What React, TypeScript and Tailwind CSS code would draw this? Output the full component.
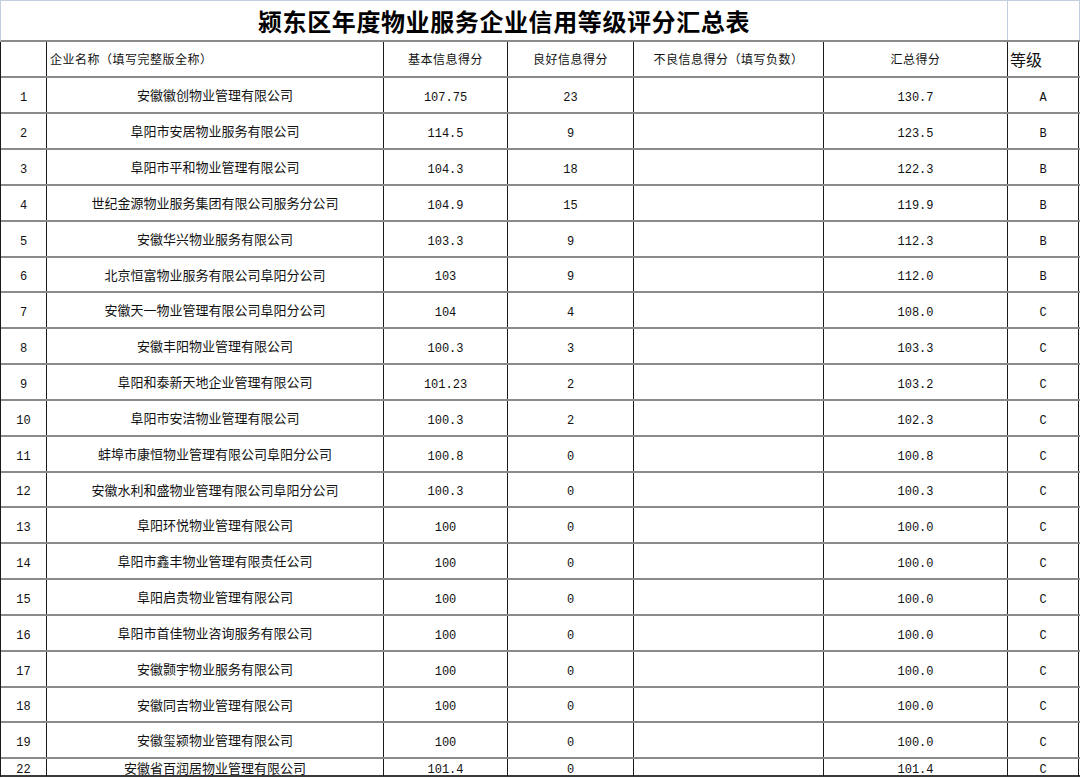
import React from 'react';

const rows = [
  { no: '1', name: '安徽徽创物业管理有限公司', base: '107.75', good: '23', total: '130.7', grade: 'A' },
  { no: '2', name: '阜阳市安居物业服务有限公司', base: '114.5', good: '9', total: '123.5', grade: 'B' },
  { no: '3', name: '阜阳市平和物业管理有限公司', base: '104.3', good: '18', total: '122.3', grade: 'B' },
  { no: '4', name: '世纪金源物业服务集团有限公司服务分公司', base: '104.9', good: '15', total: '119.9', grade: 'B' },
  { no: '5', name: '安徽华兴物业服务有限公司', base: '103.3', good: '9', total: '112.3', grade: 'B' },
  { no: '6', name: '北京恒富物业服务有限公司阜阳分公司', base: '103', good: '9', total: '112.0', grade: 'B' },
  { no: '7', name: '安徽天一物业管理有限公司阜阳分公司', base: '104', good: '4', total: '108.0', grade: 'C' },
  { no: '8', name: '安徽丰阳物业管理有限公司', base: '100.3', good: '3', total: '103.3', grade: 'C' },
  { no: '9', name: '阜阳和泰新天地企业管理有限公司', base: '101.23', good: '2', total: '103.2', grade: 'C' },
  { no: '10', name: '阜阳市安洁物业管理有限公司', base: '100.3', good: '2', total: '102.3', grade: 'C' },
  { no: '11', name: '蚌埠市康恒物业管理有限公司阜阳分公司', base: '100.8', good: '0', total: '100.8', grade: 'C' },
  { no: '12', name: '安徽水利和盛物业管理有限公司阜阳分公司', base: '100.3', good: '0', total: '100.3', grade: 'C' },
  { no: '13', name: '阜阳环悦物业管理有限公司', base: '100', good: '0', total: '100.0', grade: 'C' },
  { no: '14', name: '阜阳市鑫丰物业管理有限责任公司', base: '100', good: '0', total: '100.0', grade: 'C' },
  { no: '15', name: '阜阳启贵物业管理有限公司', base: '100', good: '0', total: '100.0', grade: 'C' },
  { no: '16', name: '阜阳市首佳物业咨询服务有限公司', base: '100', good: '0', total: '100.0', grade: 'C' },
  { no: '17', name: '安徽颢宇物业服务有限公司', base: '100', good: '0', total: '100.0', grade: 'C' },
  { no: '18', name: '安徽同吉物业管理有限公司', base: '100', good: '0', total: '100.0', grade: 'C' },
  { no: '19', name: '安徽玺颍物业管理有限公司', base: '100', good: '0', total: '100.0', grade: 'C' },
];

const cjk = "font-['Noto_Sans_CJK_SC',sans-serif]";
const mono = "font-['Liberation_Mono','Noto_Sans_CJK_SC',monospace] pt-[5px]";
const cols = 'grid grid-cols-[46px_337px_124px_126px_190px_184px_71px]';
const cell = 'flex items-center justify-center border-r border-[#1a1a1a]';

const App = () => {
  return (
    <div className="w-[1080px] h-[778px] bg-white text-[#111] overflow-hidden">
      {/* Title row */}
      <div className="flex h-[42px] border-t border-l border-[#c5cde0] border-b-2 border-b-[#8a8a8a]">
        <div className={`w-[1007px] flex items-center justify-center border-r border-[#c5cde0] text-[24px] font-bold tracking-[0.6px] text-black ${cjk}`}>
          颍东区年度物业服务企业信用等级评分汇总表
        </div>
        <div className="w-[72px] border-r border-[#c5cde0]" />
      </div>

      <div className="border-l border-[#1a1a1a]">
        {/* Header row */}
        <div className={`${cols} h-[36px] border-b-2 border-[#8a8a8a] text-[12px] tracking-[0.5px] ${cjk}`}>
          <div className={cell} />
          <div className={`${cell} !justify-start pl-[3px]`}>企业名称（填写完整版全称）</div>
          <div className={cell}>基本信息得分</div>
          <div className={cell}>良好信息得分</div>
          <div className={cell}>不良信息得分（填写负数）</div>
          <div className={cell}>汇总得分</div>
          <div className={`${cell} !justify-start pl-[2px] text-[16px] tracking-normal`}>等级</div>
        </div>

        {rows.map((r, i) => (
          <div
            key={r.no}
            className={`${cols} ${i === 5 || i === 11 || i === 17 ? 'h-[35px]' : 'h-[36px]'} border-b-2 border-[#8a8a8a] text-[12px]`}
          >
            <div className={`${cell} ${mono}`}>{r.no}</div>
            <div className={`${cell} ${cjk} text-[13px]`}>{r.name}</div>
            <div className={`${cell} ${mono}`}>{r.base}</div>
            <div className={`${cell} ${mono}`}>{r.good}</div>
            <div className={cell} />
            <div className={`${cell} ${mono}`}>{r.total}</div>
            <div className={`${cell} ${mono}`}>{r.grade}</div>
          </div>
        ))}

        {/* Last row */}
        <div className={`${cols} h-[18px] border-b-2 border-[#3a3a3a] text-[12px] leading-none`}>
          <div className={`${cell} ${mono}`}>22</div>
          <div className={`${cell} ${cjk} text-[13px]`}>安徽省百润居物业管理有限公司</div>
          <div className={`${cell} ${mono}`}>101.4</div>
          <div className={`${cell} ${mono}`}>0</div>
          <div className={cell} />
          <div className={`${cell} ${mono}`}>101.4</div>
          <div className={`${cell} ${mono}`}>C</div>
        </div>
      </div>
    </div>
  );
};

export default App;
